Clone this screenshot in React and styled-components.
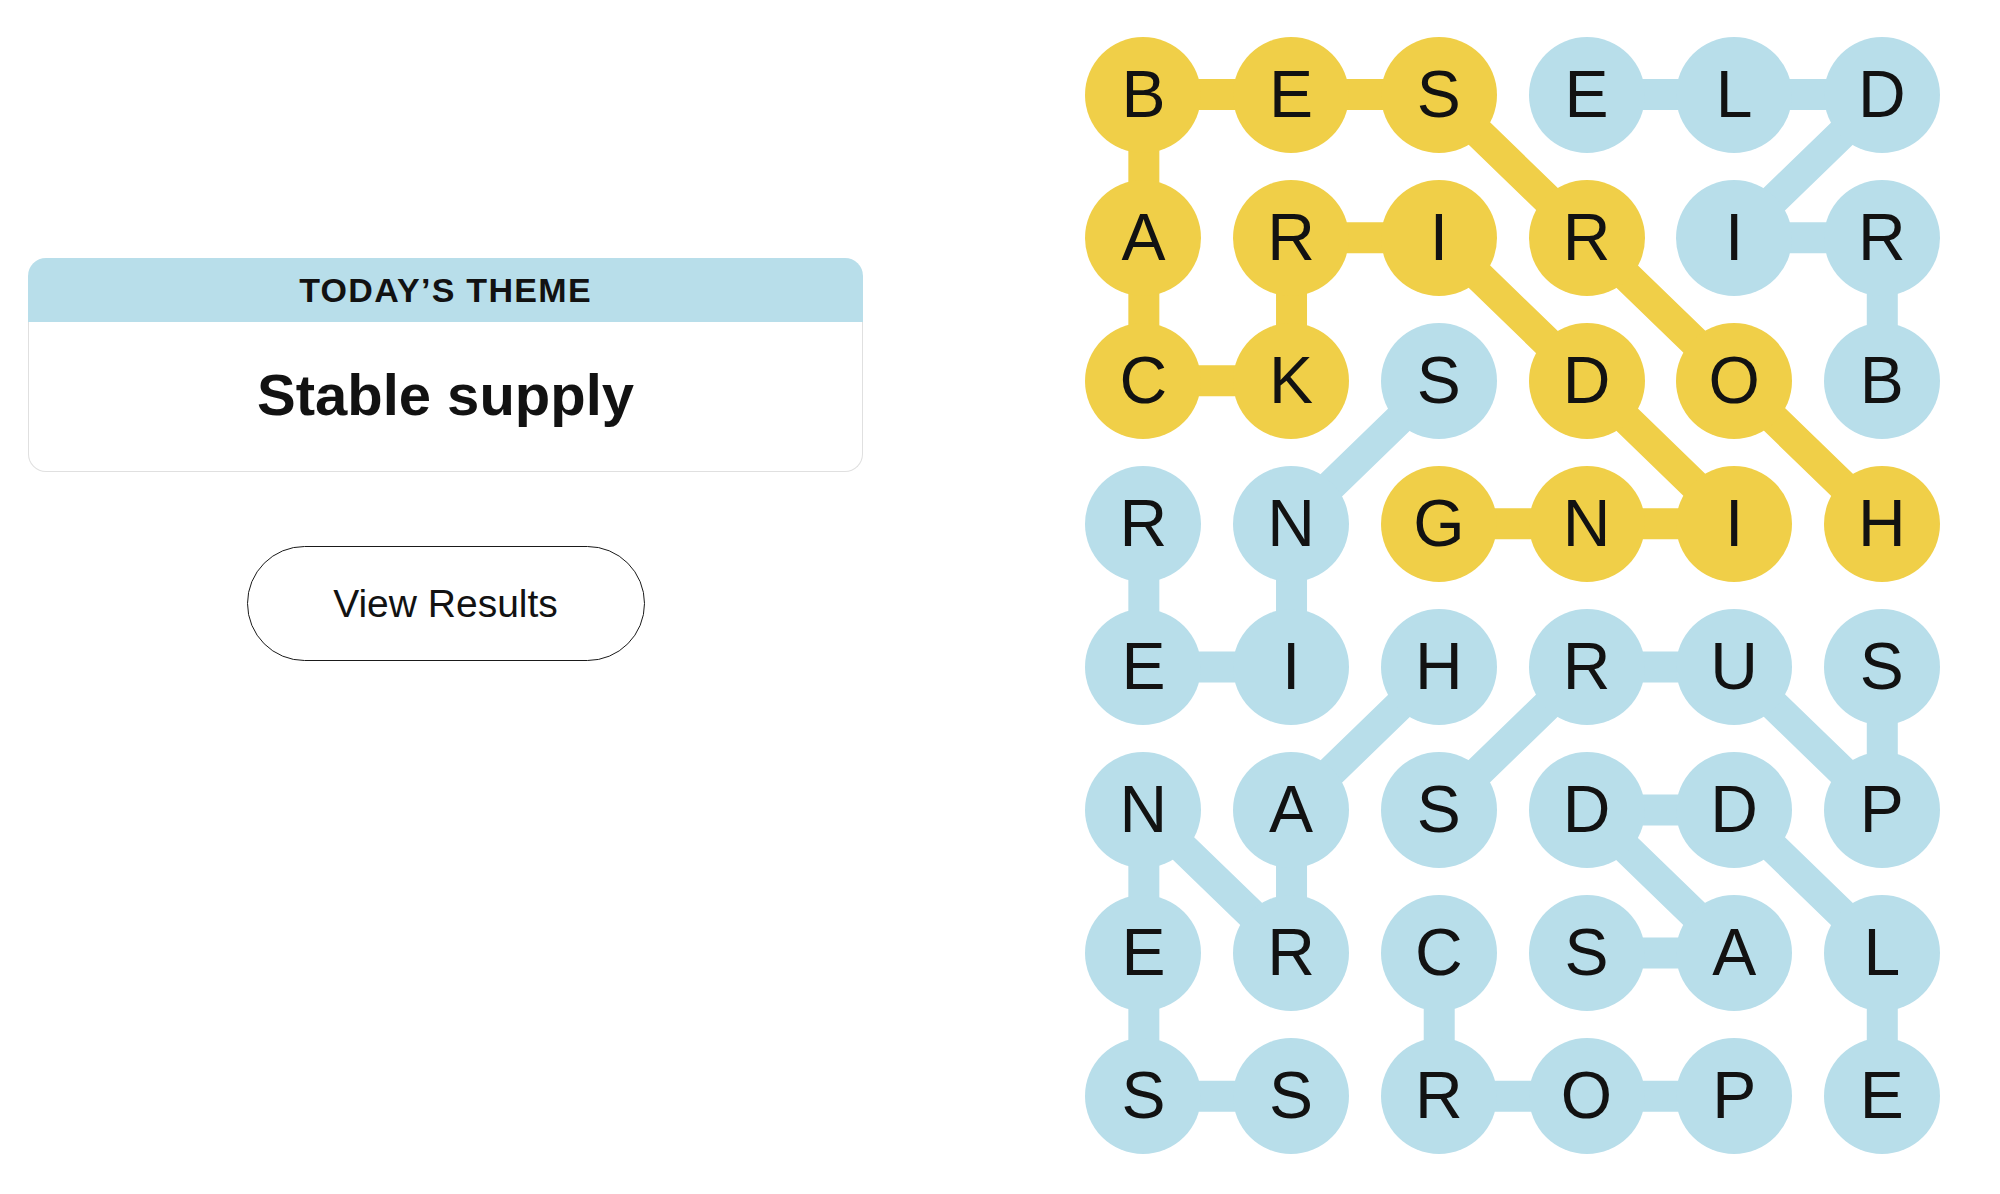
import React from 'react'
import styled, { createGlobalStyle } from 'styled-components'

const CELL_W = 147.7
const CELL_H = 143.1

const GlobalStyle = createGlobalStyle`
  html, body {
    margin: 0;
    padding: 0;
    background: #fff;
  }
  body {
    font-family: "Liberation Sans", Arial, sans-serif;
    color: #121212;
  }
`

const Page = styled.div`
  display: flex;
  align-items: flex-start;
  gap: 206.6px;
  padding: 23px 0 0 28px;
  width: 2000px;
  height: 1194px;
  box-sizing: border-box;
`

const Sidebar = styled.div`
  width: 835px;
  padding-top: 235px;
  display: flex;
  flex-direction: column;
  align-items: center;
`

const ThemeCard = styled.div`
  width: 100%;
  display: flex;
  flex-direction: column;
`

const ThemeHeader = styled.div`
  height: 64px;
  background: #b8deea;
  border-radius: 18px 18px 0 0;
  display: flex;
  align-items: center;
  justify-content: center;
  font-size: 34px;
  font-weight: 700;
  letter-spacing: 1.3px;
  color: #121212;
`

const ThemeBody = styled.div`
  height: 150px;
  border: 1px solid #e0e0e0;
  border-top: none;
  border-radius: 0 0 18px 18px;
  display: flex;
  align-items: center;
  justify-content: center;
  font-size: 58px;
  font-weight: 700;
  color: #121212;
  padding-bottom: 4px;
  box-sizing: border-box;
`

const ResultsButton = styled.button`
  margin-top: 74px;
  width: 398px;
  height: 115px;
  border: 1.5px solid #1a1a1a;
  border-radius: 60px;
  background: #fff;
  font-family: "Liberation Sans", Arial, sans-serif;
  font-size: 39px;
  color: #121212;
  cursor: pointer;
`

const Board = styled.div`
  position: relative;
  display: grid;
  grid-template-columns: repeat(6, ${CELL_W}px);
  grid-template-rows: repeat(8, ${CELL_H}px);
`

const Links = styled.svg`
  position: absolute;
  inset: 0;
  width: 100%;
  height: 100%;
  z-index: 0;
`

const Cell = styled.div`
  position: relative;
  z-index: 1;
  display: flex;
  align-items: center;
  justify-content: center;
`

const Letter = styled.div`
  width: 116px;
  height: 116px;
  border-radius: 50%;
  background: ${p => (p.$spangram ? '#f0cf48' : '#b8deea')};
  display: flex;
  align-items: center;
  justify-content: center;
  font-size: 66px;
  line-height: 1;
  color: #121212;
  padding-bottom: 2px;
  box-sizing: border-box;
`

const rows = [
  'BESELD',
  'ARIRIR',
  'CKSDOB',
  'RNGNIH',
  'EIHRUS',
  'NASDDP',
  'ERCSAL',
  'SSROPE',
]

// each found word as a list of [row, col] cells in reading order
const words = [
  { spangram: true, path: [[3, 5], [2, 4], [1, 3], [0, 2], [0, 1], [0, 0], [1, 0], [2, 0], [2, 1], [1, 1], [1, 2], [2, 3], [3, 4], [3, 3], [3, 2]] },
  { path: [[2, 5], [1, 5], [1, 4], [0, 5], [0, 4], [0, 3]] },
  { path: [[3, 0], [4, 0], [4, 1], [3, 1], [2, 2]] },
  { path: [[4, 2], [5, 1], [6, 1], [5, 0], [6, 0], [7, 0], [7, 1]] },
  { path: [[4, 5], [5, 5], [4, 4], [4, 3], [5, 2]] },
  { path: [[6, 3], [6, 4], [5, 3], [5, 4], [6, 5], [7, 5]] },
  { path: [[6, 2], [7, 2], [7, 3], [7, 4]] },
]

const spangramCells = new Set(
  words.filter(w => w.spangram).flatMap(w => w.path.map(([r, c]) => `${r}-${c}`))
)

const center = ([r, c]) => [(c + 0.5) * CELL_W, (r + 0.5) * CELL_H]

export default function App() {
  return (
    <>
      <GlobalStyle />
      <Page>
        <Sidebar>
          <ThemeCard>
            <ThemeHeader>TODAY’S THEME</ThemeHeader>
            <ThemeBody>Stable supply</ThemeBody>
          </ThemeCard>
          <ResultsButton>View Results</ResultsButton>
        </Sidebar>

        <Board>
          <Links viewBox={`0 0 ${CELL_W * 6} ${CELL_H * 8}`}>
            {words.map((w, i) => (
              <polyline
                key={i}
                points={w.path.map(p => center(p).join(',')).join(' ')}
                fill="none"
                stroke={w.spangram ? '#f0cf48' : '#b8deea'}
                strokeWidth="31"
                strokeLinejoin="round"
              />
            ))}
          </Links>
          {rows.map((row, r) =>
            row.split('').map((ch, c) => (
              <Cell key={`${r}-${c}`}>
                <Letter $spangram={spangramCells.has(`${r}-${c}`)}>{ch}</Letter>
              </Cell>
            ))
          )}
        </Board>
      </Page>
    </>
  )
}
